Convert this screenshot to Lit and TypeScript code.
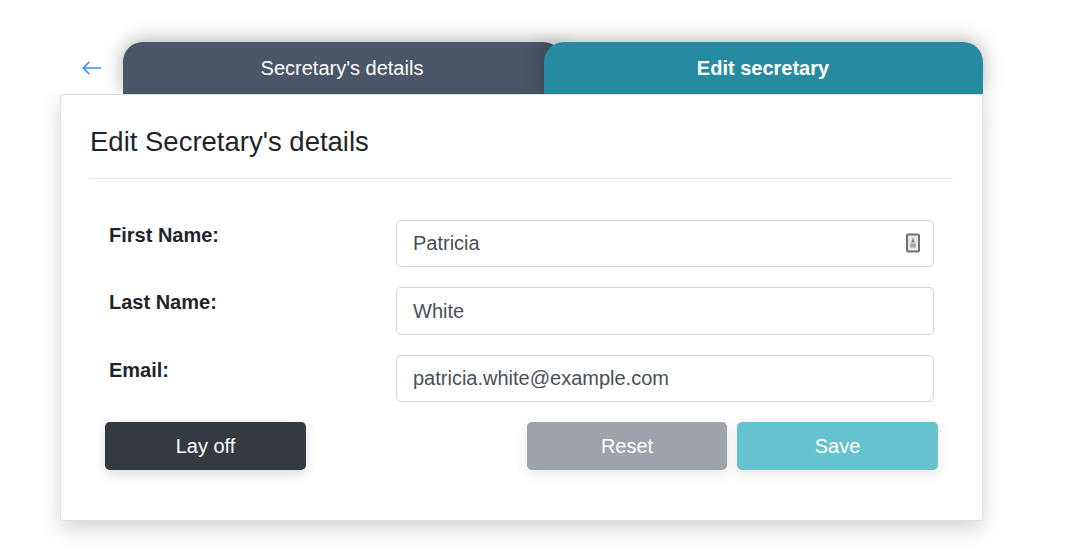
import { LitElement, html, css } from "lit";
import { customElement } from "lit/decorators.js";

@customElement("app-root")
export class AppRoot extends LitElement {
  static styles = css`
    :host { display: block; height: 551px; overflow: hidden; background: #fff; font-family: "Liberation Sans", Arial, sans-serif; color: #212529; }
    * { box-sizing: border-box; }
    .page { width: 923px; margin-left: 60px; padding-top: 42px; }
    .head { display: flex; height: 52px; }
    .back { width: 63px; display: flex; align-items: center; padding-left: 22px; }
    .back svg { display: block; }
    .tab { height: 52px; display: flex; align-items: center; justify-content: center; color: #fff; font-size: 20px; border-radius: 20px 20px 0 0; box-shadow: 0 -2px 20px rgba(0,0,0,.3); }
    .tab.a { width: 440px; background: #4a5568; padding-right: 2px; }
    .tab.b { width: 439px; margin-left: -19px; background: #268aa1; font-weight: 700; position: relative; padding-right: 1px; }
    .card { position: relative; height: 427px; background: #fff; border: 1px solid rgba(0,0,0,.125); border-radius: 4px; box-shadow: 0 8px 20px rgba(0,0,0,.17); clip-path: inset(0 -60px -60px -60px); padding: 29px 29px 0; }
    h3 { margin: 0; font-size: 27.5px; line-height: 36px; height: 36px; font-weight: 400; }
    .rule { height: 1px; background: rgba(0,0,0,.1); margin-top: 18px; }
    form { padding: 41px 19px 0 19px; margin: 0; }
    .row { display: grid; grid-template-columns: 287px 538px; height: 47.4px; margin-bottom: 20px; }
    label { font-size: 20px; font-weight: 700; line-height: 30px; }
    .field { height: 47.4px; border: 1px solid #ced4da; border-radius: 4.8px; display: flex; align-items: center; justify-content: space-between; padding: 0 12px 0 16px; font-size: 20px; color: #495057; }
    .contact { display: block; margin-top: -1px; }
    .actions { display: flex; margin: 0 -4px; }
    button { height: 48px; border: 0; border-radius: 4.8px; color: #fff; font: 20px "Liberation Sans", Arial, sans-serif; padding: 0; box-shadow: 0 4px 12px rgba(0,0,0,.14); }
    .off { width: 201px; background: #343a40; margin-right: 221px; }
    .reset { width: 200px; background: #6c757d; opacity: .65; margin-right: 10px; }
    .save { width: 201px; background: #17a2b8; opacity: .65; }
  `;

  render() {
    return html`
      <div class="page">
        <div class="head">
          <div class="back">
            <svg width="20" height="14" viewBox="0 0 20 14" fill="none" stroke="#2f8cff" stroke-width="1.5">
              <path d="M1.2 7H19M7.2 1L1.2 7L7.2 13" />
            </svg>
          </div>
          <div class="tab a">Secretary's details</div>
          <div class="tab b">Edit secretary</div>
        </div>
        <div class="card">
          <h3>Edit Secretary's details</h3>
          <div class="rule"></div>
          <form>
            <div class="row">
              <label>First Name:</label>
              <div class="field">
                <span>Patricia</span>
                <svg class="contact" width="16" height="20" viewBox="0 0 16 20">
                  <rect x="2" y="1.5" width="12" height="17" rx="1" fill="#e8e8e8" stroke="#707070" stroke-width="2"/>
                  <path d="M8 4.5L9.8 9.5H6.2Z" fill="#808080"/>
                  <rect x="5" y="10.5" width="6" height="4" fill="#aaa"/>
                </svg>
              </div>
            </div>
            <div class="row">
              <label>Last Name:</label>
              <div class="field"><span>White</span></div>
            </div>
            <div class="row">
              <label>Email:</label>
              <div class="field"><span>patricia.white@example.com</span></div>
            </div>
            <div class="actions">
              <button type="button" class="off">Lay off</button>
              <button type="button" class="reset">Reset</button>
              <button type="button" class="save">Save</button>
            </div>
          </form>
        </div>
      </div>
    `;
  }
}
